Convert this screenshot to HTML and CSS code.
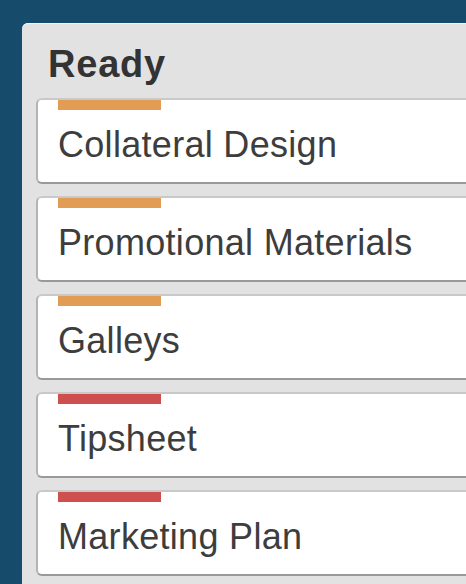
FILE: index.html
```html
<!DOCTYPE html>
<html>
<head>
<meta charset="utf-8">
<link rel="stylesheet" href="styles.css">
</head>
<body>
<div class="board">
  <section class="list">
    <h2 class="list-title">Ready</h2>
    <div class="cards">
      <div class="card"><span class="label orange"></span><div class="card-title">Collateral Design</div></div>
      <div class="card"><span class="label orange"></span><div class="card-title">Promotional Materials</div></div>
      <div class="card"><span class="label orange"></span><div class="card-title">Galleys</div></div>
      <div class="card"><span class="label red"></span><div class="card-title">Tipsheet</div></div>
      <div class="card"><span class="label red"></span><div class="card-title">Marketing Plan</div></div>
    </div>
  </section>
</div>
</body>
</html>
```
FILE: styles.css
```css
html, body {
  margin: 0;
  padding: 0;
  height: 100%;
  overflow: hidden;
  background: #174b6b;
  font-family: "Liberation Sans", Arial, sans-serif;
}
.board {
  padding: 23px 0 0 22px;
}
.list {
  width: 500px;
  height: 620px;
  background: #e2e2e2;
  border-radius: 6px 0 0 0;
  box-shadow: inset 0 1px 0 #f4f4f4;
  padding: 19px 0 0 14px;
  box-sizing: border-box;
}
.list-title {
  margin: 0 0 12px 0;
  padding-left: 12px;
  font-size: 38px;
  line-height: 44px;
  font-weight: bold;
  letter-spacing: 0.8px;
  color: #333;
}
.cards {
  display: flex;
  flex-direction: column;
  gap: 12px;
}
.card {
  background: #fff;
  border: 2px solid #b3b3b3;
  border-top-color: #c9c9c9;
  border-bottom-color: #999;
  border-right: none;
  border-radius: 6px 0 0 6px;
  padding: 0 0 17px 20px;
}
.label {
  display: block;
  width: 103px;
  height: 10px;
}
.label.orange { background: #e29c53; }
.label.red { background: #cf4f4f; }
.card-title {
  margin-top: 15px;
  font-size: 36px;
  line-height: 40px;
  letter-spacing: 0.3px;
  color: #3d3d3d;
  white-space: nowrap;
}
```
